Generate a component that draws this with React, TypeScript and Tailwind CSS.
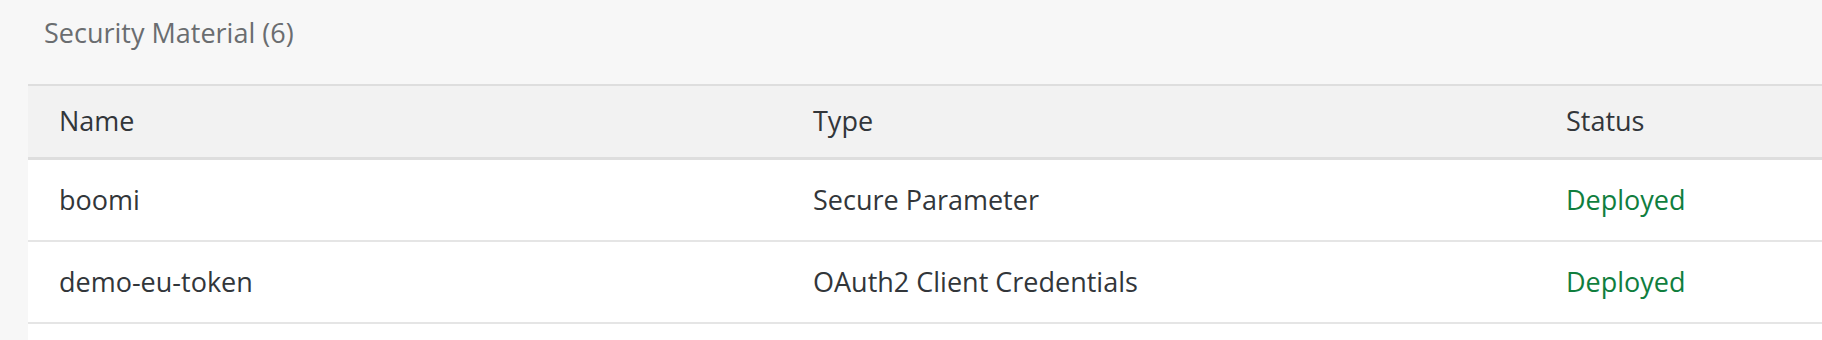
const rows = [
  { name: "boomi", type: "Secure Parameter", status: "Deployed" },
  { name: "demo-eu-token", type: "OAuth2 Client Credentials", status: "Deployed" },
];

const cols = "grid grid-cols-[754px_753px_1fr] items-center";

export default function App() {
  return (
    <div className="flex flex-col w-full h-[340px] overflow-hidden bg-[#f7f7f7] font-['Open_Sans',sans-serif] text-[27px] text-[#32363a]">
      <div className="h-[84px] pl-[44px] pt-[14px] leading-[37px] text-[#6a6d70]">Security Material (6)</div>
      <div className="flex flex-col flex-1 ml-[28px] bg-white">
        <div className={`${cols} h-[76px] bg-[#f2f2f2] border-t-2 border-b-[3px] border-[#dedede]`}>
          <div className="pl-[31px]">Name</div>
          <div className="pl-[31px]">Type</div>
          <div className="pl-[31px]">Status</div>
        </div>
        {rows.map((r, id) => (
          <div key={id} className={`${cols} h-[82px] border-b-2 border-[#e5e5e5]`}>
            <div className="pl-[31px]">{r.name}</div>
            <div className="pl-[31px]">{r.type}</div>
            <div className="pl-[31px] font-medium text-[#107e3e]">{r.status}</div>
          </div>
        ))}
      </div>
    </div>
  );
}
